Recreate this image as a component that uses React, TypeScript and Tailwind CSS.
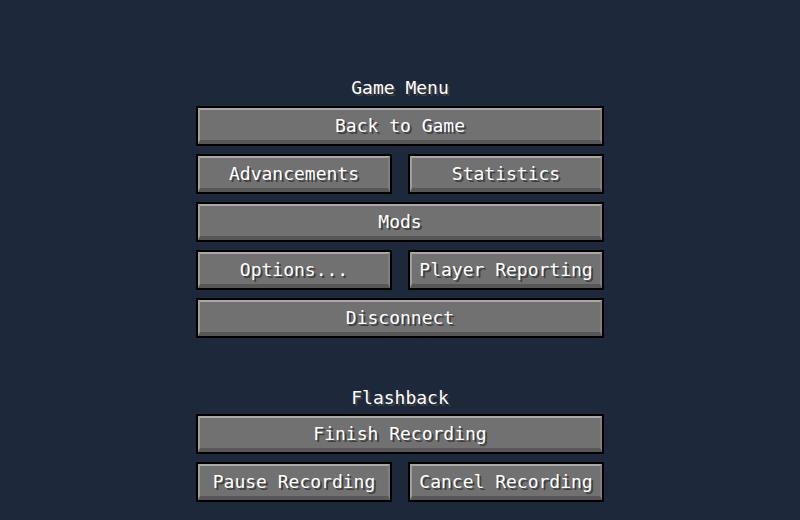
import type { ReactNode } from 'react'

const font = { fontFamily: '"DejaVu Sans Mono", "Liberation Mono", monospace' }

function McButton({ children, className = '' }: { children: ReactNode; className?: string }) {
  return (
    <button className={`h-10 border-2 border-black bg-black p-0 ${className}`}>
      <div className="flex h-full w-full items-center justify-center border-t-2 border-l-2 border-r-2 border-b-4 border-t-[#a8a8a8] border-l-[#9e9e9e] border-r-[#808080] border-b-[#575757] bg-[#717171]">
        <span className="pt-px text-[18px] font-medium leading-5 text-white [text-shadow:2px_2px_0_#3f3f3f]" style={font}>
          {children}
        </span>
      </div>
    </button>
  )
}

function Title({ children }: { children: ReactNode }) {
  return (
    <div className="text-center text-[18px] font-medium leading-5 text-white [text-shadow:2px_2px_0_#3f3f3f]" style={font}>
      {children}
    </div>
  )
}

export default function App() {
  return (
    <div className="h-[520px] w-[800px] overflow-hidden bg-[#1d293b]">
      <div className="mx-auto flex w-[408px] flex-col pt-[78px]">
        <Title>Game Menu</Title>
        <div className="mt-2 flex flex-col gap-2">
          <McButton>Back to Game</McButton>
          <div className="grid grid-cols-2 gap-4">
            <McButton>Advancements</McButton>
            <McButton>Statistics</McButton>
          </div>
          <McButton>Mods</McButton>
          <div className="grid grid-cols-2 gap-4">
            <McButton>Options...</McButton>
            <McButton>Player Reporting</McButton>
          </div>
          <McButton>Disconnect</McButton>
        </div>

        <div className="mt-[50px]">
          <Title>Flashback</Title>
        </div>
        <div className="mt-[6px] flex flex-col gap-2">
          <McButton>Finish Recording</McButton>
          <div className="grid grid-cols-2 gap-4">
            <McButton>Pause Recording</McButton>
            <McButton>Cancel Recording</McButton>
          </div>
        </div>
      </div>
    </div>
  )
}
